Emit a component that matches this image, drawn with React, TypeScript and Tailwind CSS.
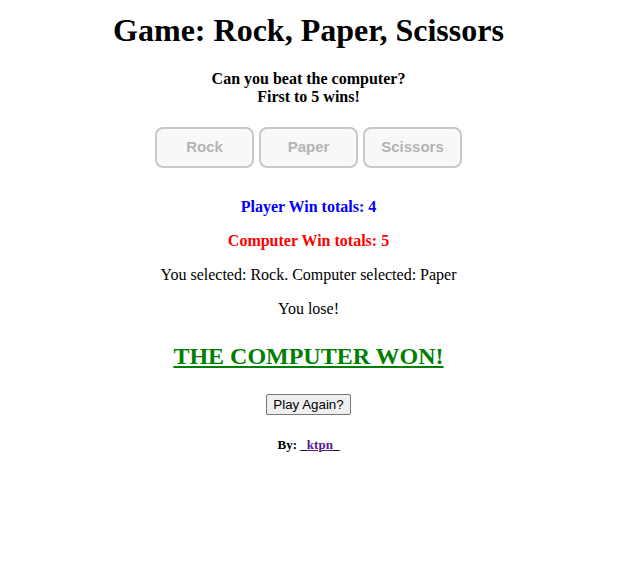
export default function App() {
  const choices = ["Rock", "Paper", "Scissors"];

  return (
    <div className="flex flex-col items-center text-center font-['Liberation_Serif',serif] text-black bg-white min-h-[579px]">
      <h1 className="mt-[13px] text-[32px] font-bold leading-[35px]">Game: Rock, Paper, Scissors</h1>

      <h4 className="mt-[22px] text-[16px] font-bold leading-[18px]">
        Can you beat the computer?
        <br />
        First to 5 wins!
      </h4>

      <div className="mt-[21px] flex gap-[5px]">
        {choices.map((c) => (
          <button
            key={c}
            disabled
            className="h-[41px] w-[99px] rounded-[8px] border-2 border-[#c8c8c8] bg-[#f8f8f8] font-['Liberation_Sans',sans-serif] text-[15px] font-bold text-[#b4b4b4]"
          >
            {c}
          </button>
        ))}
      </div>

      <p className="mt-[30px] text-[16px] font-bold leading-[18px] text-[#0000ff]">Player Win totals: 4</p>
      <p className="mt-[16px] text-[16px] font-bold leading-[18px] text-[#ff0000]">Computer Win totals: 5</p>
      <p className="mt-[16px] text-[16px] leading-[18px]">You selected: Rock. Computer selected: Paper</p>
      <p className="mt-[16px] text-[16px] leading-[18px]">You lose!</p>

      <h2 className="mt-[25px] text-[24px] font-bold leading-[27px] text-[#008000] underline">THE COMPUTER WON!</h2>

      <button className="mt-[24px] rounded-[2px] border border-[#767676] bg-[#efefef] px-[6px] py-[1px] font-['Liberation_Sans',sans-serif] text-[13.33px] leading-[17px] text-black">
        Play Again?
      </button>

      <h5 className="mt-[22px] text-[13px] font-bold leading-[15px]">
        By: _
        <a href="#" className="text-[#551a8b] underline">
          ktpn
        </a>
        _
      </h5>
    </div>
  );
}
